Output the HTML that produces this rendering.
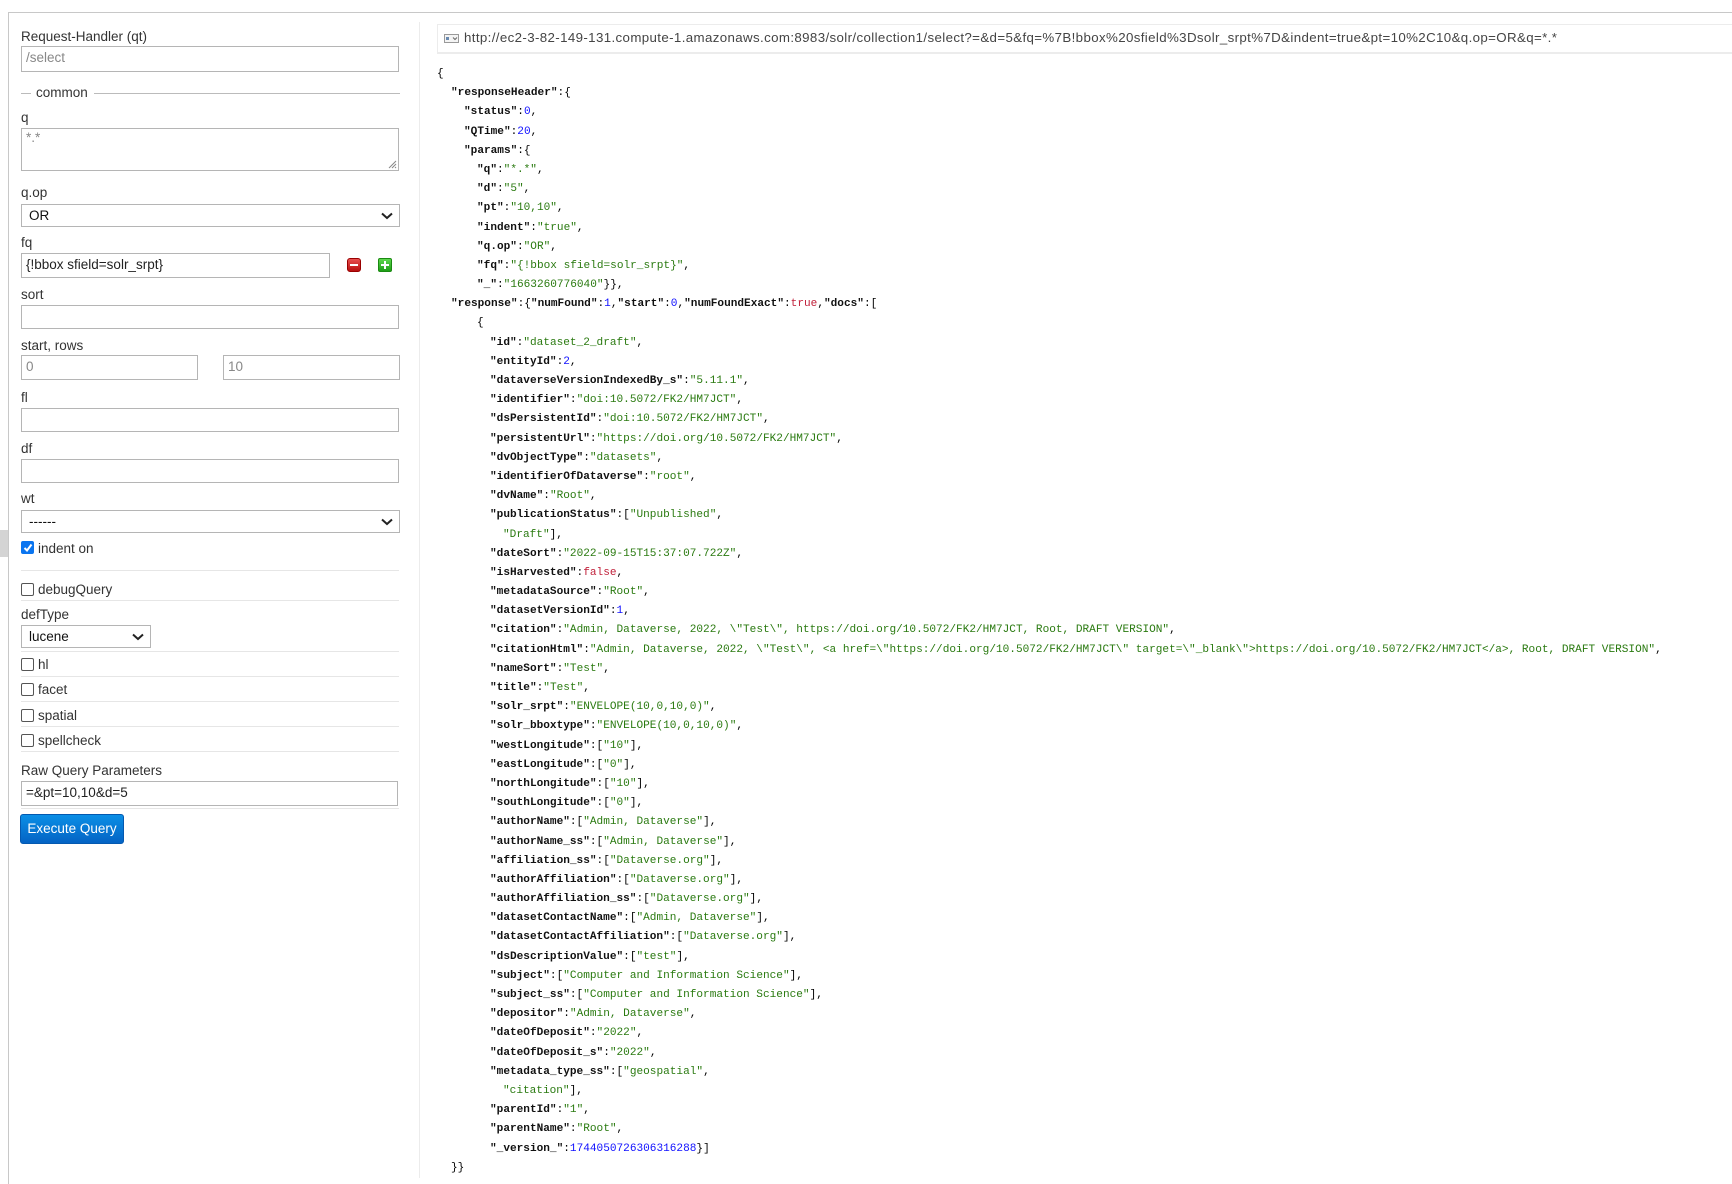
<!DOCTYPE html>
<html><head><meta charset="utf-8"><style>
*{box-sizing:border-box;margin:0;padding:0}
html,body{width:1732px;height:1184px;overflow:hidden}
body{background:#fff;position:relative;font-family:"Liberation Sans",sans-serif;color:#333}
.a{position:absolute}
.lbl{position:absolute;left:21px;font-size:13.5px;color:#333;line-height:16px}
.inp{position:absolute;border:1px solid #b5b5b5;background:#fff;font-size:13.5px;color:#333;padding-left:4px;line-height:22px}
.ph{color:#888}
.sel{position:absolute;border:1px solid #b5b5b5;background:#fff;font-size:13.5px;color:#111;padding-left:7px;line-height:21px}
.sel svg{position:absolute;right:6px;top:7px}
.sep{position:absolute;left:21px;width:378px;height:1px;background:#e6e6e6}
.cb{position:absolute;left:21px;width:13px;height:13px;border:1px solid #555;border-radius:2px;background:#fff}
.cbl{position:absolute;left:38px;font-size:13.5px;color:#333;line-height:16px}
#json{position:absolute;left:0;top:65px;font-family:"Liberation Mono",monospace;font-size:11.1px;line-height:19.2px;color:#000}
#json div{height:19.2px;white-space:pre}
.k{font-weight:bold;color:#111}
.s{color:#2a7a10}
.n{color:#1010ff}
.b{color:#c0203a}
</style></head><body>
<div class="a" style="left:8px;top:12px;width:1724px;height:1px;background:#c8c8c8"></div>
<div class="a" style="left:8px;top:12px;width:1px;height:1172px;background:#c8c8c8"></div>
<div class="a" style="left:0;top:530px;width:8px;height:27px;background:#d4d4d4"></div>
<div class="a" style="left:419px;top:22px;width:1px;height:1156px;background:#ececec"></div>

<div class="lbl" style="top:29px">Request-Handler (qt)</div>
<div class="inp" style="left:21px;top:46px;width:378px;height:26px"><span class="ph">/select</span></div>

<div class="a" style="left:21px;top:93px;width:10px;height:1px;background:#bbb"></div>
<div class="lbl" style="left:36px;top:85px">common</div>
<div class="a" style="left:94px;top:93px;width:306px;height:1px;background:#bbb"></div>

<div class="lbl" style="top:110px">q</div>
<div class="inp" style="left:21px;top:128px;width:378px;height:43px;line-height:18px"><span class="ph">*.*</span>
<svg class="a" style="right:1px;bottom:1px" width="9" height="9"><path d="M8 1L1 8M8 4L4 8M8 7L7 8" stroke="#888" stroke-width="1"/></svg></div>

<div class="lbl" style="top:185px">q.op</div>
<div class="sel" style="left:21px;top:204px;width:379px;height:23px">OR<svg width="12" height="8"><path d="M1 1.5L6 6L11 1.5" stroke="#222" stroke-width="2" fill="none"/></svg></div>

<div class="lbl" style="top:235px">fq</div>
<div class="inp" style="left:21px;top:253px;width:309px;height:25px;color:#222">{!bbox sfield=solr_srpt}</div>
<div class="a" style="left:347px;top:258px;width:14px;height:14px;border-radius:3px;background:linear-gradient(#e85050,#b81010);border:1px solid #900"><div class="a" style="left:2px;top:5px;width:8px;height:2px;background:#fff"></div></div>
<div class="a" style="left:378px;top:258px;width:14px;height:14px;border-radius:2px;background:linear-gradient(#5fd84e,#1e9e16);border:1px solid #1a8a12"><div class="a" style="left:2px;top:5px;width:8px;height:2px;background:#fff"></div><div class="a" style="left:5px;top:2px;width:2px;height:8px;background:#fff"></div></div>

<div class="lbl" style="top:287px">sort</div>
<div class="inp" style="left:21px;top:305px;width:378px;height:24px"></div>

<div class="lbl" style="top:338px">start, rows</div>
<div class="inp" style="left:21px;top:355px;width:177px;height:25px"><span class="ph">0</span></div>
<div class="inp" style="left:223px;top:355px;width:177px;height:25px"><span class="ph">10</span></div>

<div class="lbl" style="top:390px">fl</div>
<div class="inp" style="left:21px;top:408px;width:378px;height:24px"></div>

<div class="lbl" style="top:441px">df</div>
<div class="inp" style="left:21px;top:459px;width:378px;height:24px"></div>

<div class="lbl" style="top:491px">wt</div>
<div class="sel" style="left:21px;top:510px;width:379px;height:23px">------<svg width="12" height="8"><path d="M1 1.5L6 6L11 1.5" stroke="#222" stroke-width="2" fill="none"/></svg></div>

<div class="cb" style="top:541px;background:#0a75f0;border-color:#0a75f0"><svg class="a" style="left:1px;top:1px" width="10" height="10"><path d="M1.5 5L4 7.5L8.5 1.5" stroke="#fff" stroke-width="2" fill="none"/></svg></div>
<div class="cbl" style="top:541px">indent on</div>
<div class="sep" style="top:570px"></div>

<div class="cb" style="top:583px"></div>
<div class="cbl" style="top:582px">debugQuery</div>
<div class="sep" style="top:600px"></div>

<div class="lbl" style="top:607px">defType</div>
<div class="sel" style="left:21px;top:625px;width:130px;height:23px">lucene<svg width="12" height="8"><path d="M1 1.5L6 6L11 1.5" stroke="#222" stroke-width="2" fill="none"/></svg></div>
<div class="sep" style="top:651px"></div>

<div class="cb" style="top:658px"></div><div class="cbl" style="top:657px">hl</div>
<div class="sep" style="top:676px"></div>
<div class="cb" style="top:683px"></div><div class="cbl" style="top:682px">facet</div>
<div class="sep" style="top:701px"></div>
<div class="cb" style="top:709px"></div><div class="cbl" style="top:708px">spatial</div>
<div class="sep" style="top:726px"></div>
<div class="cb" style="top:734px"></div><div class="cbl" style="top:733px">spellcheck</div>
<div class="sep" style="top:751px"></div>

<div class="lbl" style="top:763px">Raw Query Parameters</div>
<div class="inp" style="left:21px;top:781px;width:377px;height:25px;color:#222">=&amp;pt=10,10&amp;d=5</div>
<div class="sep" style="top:808px"></div>

<div class="a" style="left:20px;top:814px;width:104px;height:30px;border-radius:3px;background:linear-gradient(#0b8fe6,#0463c4);border:1px solid #0459b0;color:#fff;font-size:13.5px;line-height:28px;text-align:center">Execute Query</div>

<div class="a" style="left:437px;top:24px;width:1300px;height:30px;border:1px solid #ececec;border-bottom:2px solid #ececec"></div>
<svg class="a" style="left:444px;top:34px" width="15" height="9"><rect x="0.5" y="0.5" width="14" height="8" fill="#f4f4f4" stroke="#999"/><rect x="2" y="3" width="3" height="3" fill="#6a8ab0"/><path d="M9 3.5L11 5.5L13 3.5" stroke="#666" fill="none"/></svg>
<div class="a" style="left:464px;top:30px;font-size:13.3px;color:#444;white-space:nowrap;letter-spacing:0.37px">http://ec2-3-82-149-131.compute-1.amazonaws.com:8983/solr/collection1/select?=&amp;d=5&amp;fq=%7B!bbox%20sfield%3Dsolr_srpt%7D&amp;indent=true&amp;pt=10%2C10&amp;q.op=OR&amp;q=*.*</div>

<div id="json"><div style="padding-left:437px">{</div><div style="padding-left:451px"><span class="k">"responseHeader"</span>:{</div><div style="padding-left:464px"><span class="k">"status"</span>:<span class="n">0</span>,</div><div style="padding-left:464px"><span class="k">"QTime"</span>:<span class="n">20</span>,</div><div style="padding-left:464px"><span class="k">"params"</span>:{</div><div style="padding-left:477px"><span class="k">"q"</span>:<span class="s">"*.*"</span>,</div><div style="padding-left:477px"><span class="k">"d"</span>:<span class="s">"5"</span>,</div><div style="padding-left:477px"><span class="k">"pt"</span>:<span class="s">"10,10"</span>,</div><div style="padding-left:477px"><span class="k">"indent"</span>:<span class="s">"true"</span>,</div><div style="padding-left:477px"><span class="k">"q.op"</span>:<span class="s">"OR"</span>,</div><div style="padding-left:477px"><span class="k">"fq"</span>:<span class="s">"{!bbox sfield=solr_srpt}"</span>,</div><div style="padding-left:477px"><span class="k">"_"</span>:<span class="s">"1663260776040"</span>}},</div><div style="padding-left:451px"><span class="k">"response"</span>:{<span class="k">"numFound"</span>:<span class="n">1</span>,<span class="k">"start"</span>:<span class="n">0</span>,<span class="k">"numFoundExact"</span>:<span class="b">true</span>,<span class="k">"docs"</span>:[</div><div style="padding-left:477px">{</div><div style="padding-left:490px"><span class="k">"id"</span>:<span class="s">"dataset_2_draft"</span>,</div><div style="padding-left:490px"><span class="k">"entityId"</span>:<span class="n">2</span>,</div><div style="padding-left:490px"><span class="k">"dataverseVersionIndexedBy_s"</span>:<span class="s">"5.11.1"</span>,</div><div style="padding-left:490px"><span class="k">"identifier"</span>:<span class="s">"doi:10.5072/FK2/HM7JCT"</span>,</div><div style="padding-left:490px"><span class="k">"dsPersistentId"</span>:<span class="s">"doi:10.5072/FK2/HM7JCT"</span>,</div><div style="padding-left:490px"><span class="k">"persistentUrl"</span>:<span class="s">"https://doi.org/10.5072/FK2/HM7JCT"</span>,</div><div style="padding-left:490px"><span class="k">"dvObjectType"</span>:<span class="s">"datasets"</span>,</div><div style="padding-left:490px"><span class="k">"identifierOfDataverse"</span>:<span class="s">"root"</span>,</div><div style="padding-left:490px"><span class="k">"dvName"</span>:<span class="s">"Root"</span>,</div><div style="padding-left:490px"><span class="k">"publicationStatus"</span>:[<span class="s">"Unpublished"</span>,</div><div style="padding-left:503px"><span class="s">"Draft"</span>],</div><div style="padding-left:490px"><span class="k">"dateSort"</span>:<span class="s">"2022-09-15T15:37:07.722Z"</span>,</div><div style="padding-left:490px"><span class="k">"isHarvested"</span>:<span class="b">false</span>,</div><div style="padding-left:490px"><span class="k">"metadataSource"</span>:<span class="s">"Root"</span>,</div><div style="padding-left:490px"><span class="k">"datasetVersionId"</span>:<span class="n">1</span>,</div><div style="padding-left:490px"><span class="k">"citation"</span>:<span class="s">"Admin, Dataverse, 2022, \"Test\", https://doi.org/10.5072/FK2/HM7JCT, Root, DRAFT VERSION"</span>,</div><div style="padding-left:490px"><span class="k">"citationHtml"</span>:<span class="s">"Admin, Dataverse, 2022, \"Test\", &lt;a href=\"https://doi.org/10.5072/FK2/HM7JCT\" target=\"_blank\"&gt;https://doi.org/10.5072/FK2/HM7JCT&lt;/a&gt;, Root, DRAFT VERSION"</span>,</div><div style="padding-left:490px"><span class="k">"nameSort"</span>:<span class="s">"Test"</span>,</div><div style="padding-left:490px"><span class="k">"title"</span>:<span class="s">"Test"</span>,</div><div style="padding-left:490px"><span class="k">"solr_srpt"</span>:<span class="s">"ENVELOPE(10,0,10,0)"</span>,</div><div style="padding-left:490px"><span class="k">"solr_bboxtype"</span>:<span class="s">"ENVELOPE(10,0,10,0)"</span>,</div><div style="padding-left:490px"><span class="k">"westLongitude"</span>:[<span class="s">"10"</span>],</div><div style="padding-left:490px"><span class="k">"eastLongitude"</span>:[<span class="s">"0"</span>],</div><div style="padding-left:490px"><span class="k">"northLongitude"</span>:[<span class="s">"10"</span>],</div><div style="padding-left:490px"><span class="k">"southLongitude"</span>:[<span class="s">"0"</span>],</div><div style="padding-left:490px"><span class="k">"authorName"</span>:[<span class="s">"Admin, Dataverse"</span>],</div><div style="padding-left:490px"><span class="k">"authorName_ss"</span>:[<span class="s">"Admin, Dataverse"</span>],</div><div style="padding-left:490px"><span class="k">"affiliation_ss"</span>:[<span class="s">"Dataverse.org"</span>],</div><div style="padding-left:490px"><span class="k">"authorAffiliation"</span>:[<span class="s">"Dataverse.org"</span>],</div><div style="padding-left:490px"><span class="k">"authorAffiliation_ss"</span>:[<span class="s">"Dataverse.org"</span>],</div><div style="padding-left:490px"><span class="k">"datasetContactName"</span>:[<span class="s">"Admin, Dataverse"</span>],</div><div style="padding-left:490px"><span class="k">"datasetContactAffiliation"</span>:[<span class="s">"Dataverse.org"</span>],</div><div style="padding-left:490px"><span class="k">"dsDescriptionValue"</span>:[<span class="s">"test"</span>],</div><div style="padding-left:490px"><span class="k">"subject"</span>:[<span class="s">"Computer and Information Science"</span>],</div><div style="padding-left:490px"><span class="k">"subject_ss"</span>:[<span class="s">"Computer and Information Science"</span>],</div><div style="padding-left:490px"><span class="k">"depositor"</span>:<span class="s">"Admin, Dataverse"</span>,</div><div style="padding-left:490px"><span class="k">"dateOfDeposit"</span>:<span class="s">"2022"</span>,</div><div style="padding-left:490px"><span class="k">"dateOfDeposit_s"</span>:<span class="s">"2022"</span>,</div><div style="padding-left:490px"><span class="k">"metadata_type_ss"</span>:[<span class="s">"geospatial"</span>,</div><div style="padding-left:503px"><span class="s">"citation"</span>],</div><div style="padding-left:490px"><span class="k">"parentId"</span>:<span class="s">"1"</span>,</div><div style="padding-left:490px"><span class="k">"parentName"</span>:<span class="s">"Root"</span>,</div><div style="padding-left:490px"><span class="k">"_version_"</span>:<span class="n">1744050726306316288</span>}]</div><div style="padding-left:451px">}}</div></div>
</body></html>
